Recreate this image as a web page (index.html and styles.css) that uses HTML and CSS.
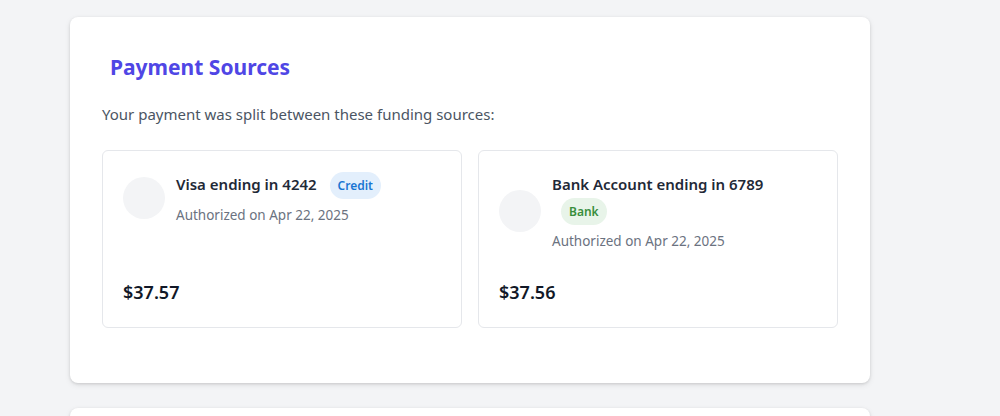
FILE: index.html
```html
<!DOCTYPE html>
<html lang="en">
<head>
<meta charset="utf-8">
<title>Payment Sources</title>
<link rel="stylesheet" href="styles.css">
</head>
<body>
<div class="page">
  <section class="panel">
    <h2 class="panel-title">Payment Sources</h2>
    <p class="panel-desc">Your payment was split between these funding sources:</p>
    <div class="sources">
      <div class="source">
        <div class="source-head">
          <div class="source-icon"></div>
          <div class="source-info">
            <div class="source-name">Visa ending in 4242 <span class="badge badge-credit">Credit</span></div>
            <div class="source-date">Authorized on Apr 22, 2025</div>
          </div>
        </div>
        <div class="source-amount">$37.57</div>
      </div>
      <div class="source">
        <div class="source-head">
          <div class="source-icon"></div>
          <div class="source-info">
            <div class="source-name">Bank Account ending in 6789 <span class="badge badge-bank">Bank</span></div>
            <div class="source-date">Authorized on Apr 22, 2025</div>
          </div>
        </div>
        <div class="source-amount">$37.56</div>
      </div>
    </div>
  </section>
  <section class="panel panel-next"></section>
</div>
</body>
</html>
```
FILE: styles.css
```css
* { box-sizing: border-box; }
html, body { margin: 0; padding: 0; }
body {
  background: #f3f4f6;
  font-family: "Noto Sans", "Open Sans", "Liberation Sans", sans-serif;
  color: #1f2937;
  overflow: hidden;
}
.page {
  display: flex;
  flex-direction: column;
  gap: 25px;
  width: 800px;
  margin-left: 70px;
  padding-top: 17px;
}
.panel {
  background: #fff;
  border-radius: 8px;
  box-shadow: 0 1px 3px rgba(0,0,0,0.12), 0 2px 6px rgba(0,0,0,0.08);
  padding: 36px 32px 55px;
}
.panel-next { height: 120px; padding: 0; }
.panel-title {
  margin: 0 0 22px 8px;
  font-size: 21px;
  line-height: 28px;
  font-weight: 700;
  color: #4f46e5;
}
.panel-desc {
  margin: 0 0 25px;
  font-size: 15px;
  line-height: 22px;
  color: #4b5563;
}
.sources {
  display: grid;
  grid-template-columns: 1fr 1fr;
  gap: 16px;
}
.source {
  border: 1px solid #e5e7eb;
  border-radius: 6px;
  padding: 20px 20px 21px;
  display: flex;
  flex-direction: column;
  min-height: 178px;
}
.source-head {
  display: flex;
  align-items: center;
  gap: 11px;
}
.source-icon {
  width: 42px;
  height: 42px;
  border-radius: 50%;
  background: #f3f4f6;
  flex: none;
}
.source-name {
  font-size: 15px;
  line-height: 26px;
  font-weight: 600;
  color: #1f2937;
}
.badge {
  display: inline-block;
  margin-left: 9px;
  padding: 4px 8px;
  border-radius: 14px;
  font-size: 12px;
  line-height: 19px;
  font-weight: 600;
  vertical-align: middle;
}
.badge-credit { background: #e3effc; color: #1976d2; }
.badge-bank { background: #e8f4e9; color: #388e3c; }
.source-date {
  font-size: 13.5px;
  line-height: 20px;
  color: #6b7280;
  margin-top: 6px;
}
.source-amount {
  margin-top: auto;
  font-size: 18px;
  line-height: 28px;
  font-weight: 600;
  color: #111827;
}
```
